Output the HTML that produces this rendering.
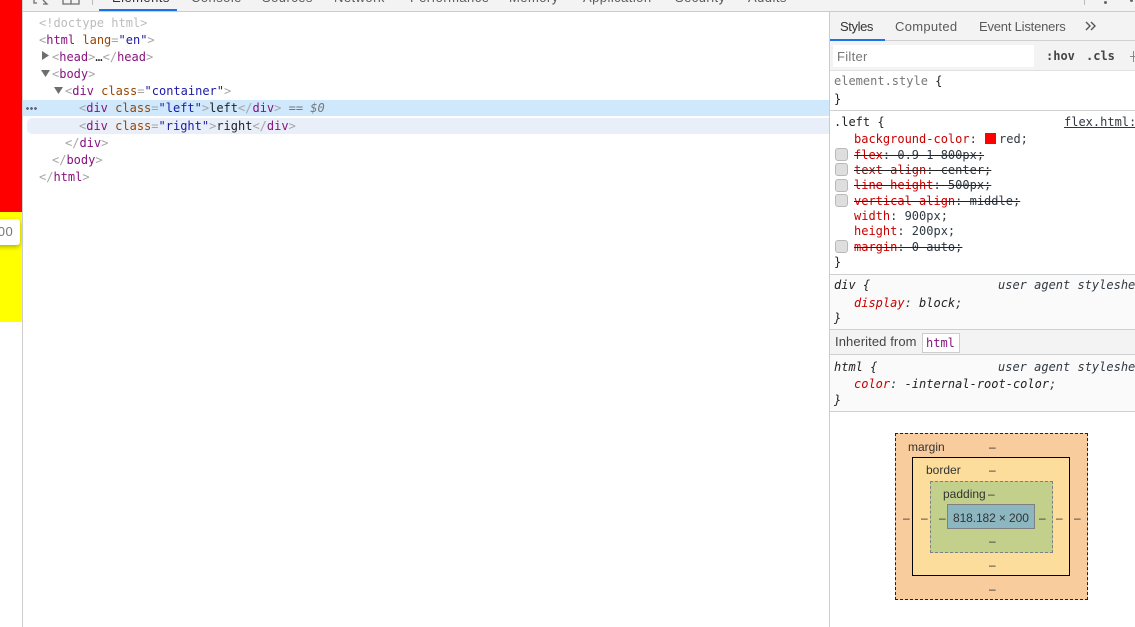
<!DOCTYPE html>
<html lang="en"><head><meta charset="utf-8"><title>DevTools</title>
<style>
*{box-sizing:border-box}
html,body{margin:0;padding:0;width:1135px;height:627px;overflow:hidden;background:#fff}
body{position:relative;font-family:"Liberation Sans",sans-serif}
.a{position:absolute}
.t{position:absolute;white-space:pre;line-height:16px;height:16px}
.m{font-family:"DejaVu Sans Mono","Liberation Mono",monospace;font-size:12px;color:#303942}
.u{font-size:13px;color:#5a5a5a}
.g{color:#a5a5a5}.p{color:#881280}.n{color:#994500}.v{color:#1a1aa6}.k{color:#222}
.r{color:#c80000}.d{color:#303942}
.s{text-decoration:line-through;text-decoration-color:#222}
.c{position:absolute;left:835px;width:13px;height:13px;background:#dedede;border:1px solid #b9b9b9;border-radius:3px}
.b{font-size:12px;color:#333}
.l{position:absolute;background:#d0d0d0;height:1px}
.tab{position:absolute;top:-10px;font-size:13px;letter-spacing:.45px;line-height:16px;color:#5a5a5a;white-space:pre}
</style></head><body>

<!-- page slice -->
<div class="a" style="left:0;top:0;width:22px;height:212px;background:#f00"></div>
<div class="a" style="left:0;top:212px;width:22px;height:110px;background:#ff0"></div>
<div class="a" style="left:-8px;top:219px;width:28px;height:26px;background:#fff;border-radius:3px;box-shadow:0 2px 5px rgba(0,0,0,.3)"></div>
<div class="t" style="left:-10px;top:224px;font-size:13px;color:#777;letter-spacing:.5px">800</div>
<div class="a" style="left:22px;top:0;width:1px;height:627px;background:#ccc"></div>

<!-- top tabs -->
<div class="a" style="left:23px;top:0;width:1112px;height:12px;background:#f3f3f3;border-bottom:1px solid #ccc;overflow:hidden">
  <svg class="a" style="left:9px;top:0" width="50" height="8" viewBox="0 0 50 8" fill="none" stroke="#6e6e6e" stroke-width="1.3"><path d="M2 0v3h3M11 0l4 4h-4"/><path d="M31 0v4h16V0M39 0v4"/></svg>
  <div class="a" style="left:69px;top:0;width:1px;height:5px;background:#bbb"></div>
  <div class="tab" style="left:89px;color:#333">Elements</div>
  <div class="tab" style="left:168px">Console</div>
  <div class="tab" style="left:239px">Sources</div>
  <div class="tab" style="left:311px">Network</div>
  <div class="tab" style="left:387px">Performance</div>
  <div class="tab" style="left:486px">Memory</div>
  <div class="tab" style="left:560px">Application</div>
  <div class="tab" style="left:652px">Security</div>
  <div class="tab" style="left:725px">Audits</div>
  <div class="a" style="left:76px;top:9px;width:78px;height:2px;background:#1a73e8"></div>
  <div class="a" style="left:1061px;top:0;width:1px;height:5px;background:#bbb"></div>
  <div class="a" style="left:1081px;top:1px;width:3px;height:3px;border-radius:50%;background:#666"></div>
  <div class="a" style="left:1107px;top:-1px;width:3px;height:3px;border-radius:50%;background:#666"></div>
</div>

<!-- DOM tree -->
<div class="a" style="left:23px;top:100px;width:806px;height:16px;background:#cfe8fc"></div>
<div class="a" style="left:27px;top:118px;width:802px;height:16px;background:#e9eff9;border-radius:5px 0 0 5px"></div>
<div class="a" style="left:26px;top:107px;width:12px;height:3px;background:radial-gradient(circle at 1.5px 1.5px,#5f6b76 1.3px,transparent 1.5px) 0 0/4px 3px repeat-x"></div>
<div class="t m g" style="left:39px;top:15px;color:#bcbcbc">&lt;!doctype html&gt;</div>
<div class="t m" style="left:39px;top:32px"><span class="g">&lt;</span><span class="p">html</span> <span class="n">lang</span><span class="g">=</span><span class="v">"en"</span><span class="g">&gt;</span></div>
<svg class="a" style="left:42px;top:51px" width="8" height="10"><path d="M0 0l7 4.5L0 9z" fill="#6e6e6e"/></svg>
<div class="t m" style="left:52px;top:49px"><span class="g">&lt;</span><span class="p">head</span><span class="g">&gt;</span><span class="k">…</span><span class="g">&lt;/</span><span class="p">head</span><span class="g">&gt;</span></div>
<svg class="a" style="left:41px;top:70px" width="10" height="8"><path d="M0 0h9L4.5 7z" fill="#6e6e6e"/></svg>
<div class="t m" style="left:52px;top:66px"><span class="g">&lt;</span><span class="p">body</span><span class="g">&gt;</span></div>
<svg class="a" style="left:54px;top:87px" width="10" height="8"><path d="M0 0h9L4.5 7z" fill="#6e6e6e"/></svg>
<div class="t m" style="left:65px;top:83px"><span class="g">&lt;</span><span class="p">div</span> <span class="n">class</span><span class="g">=</span><span class="v">"container"</span><span class="g">&gt;</span></div>
<div class="t m" style="left:79px;top:100px"><span class="g">&lt;</span><span class="p">div</span> <span class="n">class</span><span class="g">=</span><span class="v">"left"</span><span class="g">&gt;</span><span class="k">left</span><span class="g">&lt;/</span><span class="p">div</span><span class="g">&gt;</span><span style="color:#777"> == <i>$0</i></span></div>
<div class="t m" style="left:79px;top:118px"><span class="g">&lt;</span><span class="p">div</span> <span class="n">class</span><span class="g">=</span><span class="v">"right"</span><span class="g">&gt;</span><span class="k">right</span><span class="g">&lt;/</span><span class="p">div</span><span class="g">&gt;</span></div>
<div class="t m" style="left:65px;top:135px"><span class="g">&lt;/</span><span class="p">div</span><span class="g">&gt;</span></div>
<div class="t m" style="left:52px;top:152px"><span class="g">&lt;/</span><span class="p">body</span><span class="g">&gt;</span></div>
<div class="t m" style="left:39px;top:169px"><span class="g">&lt;/</span><span class="p">html</span><span class="g">&gt;</span></div>

<!-- sidebar -->
<div class="a" style="left:829px;top:12px;width:1px;height:615px;background:#ccc"></div>
<div class="a" style="left:830px;top:12px;width:305px;height:58px;background:#f3f3f3"></div>
<div class="l" style="left:830px;top:40px;width:305px"></div>
<div class="a" style="left:830px;top:39px;width:55px;height:2px;background:#1a73e8"></div>
<div class="t u" style="left:840px;top:19px;color:#333;letter-spacing:-.4px">Styles</div>
<div class="t u" style="left:895px;top:19px;letter-spacing:.3px">Computed</div>
<div class="t u" style="left:979px;top:19px;letter-spacing:-.2px">Event Listeners</div>
<svg class="a" style="left:1085px;top:21px" width="12" height="10" fill="none" stroke="#555" stroke-width="1.4"><path d="M1 1l4 4-4 4M6 1l4 4-4 4"/></svg>
<div class="a" style="left:833px;top:45px;width:201px;height:22px;background:#fff"></div>
<div class="t u" style="left:837px;top:49px;color:#777;letter-spacing:.3px">Filter</div>
<div class="t m" style="left:1046px;top:48px;font-weight:bold;color:#444">:hov</div>
<div class="t m" style="left:1086px;top:48px;font-weight:bold;color:#444">.cls</div>
<div class="a" style="left:1130px;top:56px;width:5px;height:1px;background:#888"></div>
<div class="a" style="left:1133px;top:51px;width:1px;height:11px;background:#888"></div>
<div class="l" style="left:830px;top:70px;width:305px;background:#e0e0e0"></div>

<div class="t m" style="left:834px;top:73px;color:#777">element.style <span class="k">{</span></div>
<div class="t m k" style="left:834px;top:91px">}</div>
<div class="l" style="left:830px;top:110px;width:305px"></div>

<div class="t m k" style="left:834px;top:114px">.left {</div>
<div class="t m k" style="left:1064px;top:114px;text-decoration:underline;color:#303942">flex.html:</div>
<div class="t m" style="left:854px;top:131px"><span class="r">background-color</span>:</div>
<div class="a" style="left:985px;top:133px;width:11px;height:11px;background:#f00"></div>
<div class="t m" style="left:999px;top:131px">red;</div>
<div class="c" style="top:148px"></div>
<div class="t m s" style="left:854px;top:147px"><span class="r">flex</span>: 0.9 1 800px;</div>
<div class="c" style="top:163px"></div>
<div class="t m s" style="left:854px;top:162px"><span class="r">text-align</span>: center;</div>
<div class="c" style="top:179px"></div>
<div class="t m s" style="left:854px;top:177px"><span class="r">line-height</span>: 500px;</div>
<div class="c" style="top:194px"></div>
<div class="t m s" style="left:854px;top:193px"><span class="r">vertical-align</span>: middle;</div>
<div class="t m" style="left:854px;top:208px"><span class="r">width</span>: 900px;</div>
<div class="t m" style="left:854px;top:223px"><span class="r">height</span>: 200px;</div>
<div class="c" style="top:240px"></div>
<div class="t m s" style="left:854px;top:239px"><span class="r">margin</span>: 0 auto;</div>
<div class="t m k" style="left:834px;top:254px">}</div>
<div class="l" style="left:830px;top:274px;width:305px"></div>

<div class="a" style="left:830px;top:275px;width:305px;height:136px;background:#fafafa"></div>
<div class="t m k" style="left:834px;top:277px;font-style:italic">div {</div>
<div class="t m" style="left:998px;top:277px;font-style:italic">user agent styleshe</div>
<div class="t m" style="left:854px;top:295px;font-style:italic"><span class="r">display</span>: <span class="k">block</span>;</div>
<div class="t m k" style="left:834px;top:310px;font-style:italic">}</div>
<div class="a" style="left:830px;top:329px;width:305px;height:26px;background:#f3f3f3;border-top:1px solid #d0d0d0;border-bottom:1px solid #d0d0d0"></div>
<div class="t u" style="left:835px;top:334px;color:#444;letter-spacing:.1px">Inherited from</div>
<div class="a" style="left:922px;top:333px;width:38px;height:20px;background:#fff;border:1px solid #ccc"></div>
<div class="t m p" style="left:926px;top:335px">html</div>
<div class="t m k" style="left:834px;top:359px;font-style:italic">html {</div>
<div class="t m" style="left:998px;top:359px;font-style:italic">user agent styleshe</div>
<div class="t m" style="left:854px;top:376px;font-style:italic"><span class="r">color</span>: <span class="k">-internal-root-color</span>;</div>
<div class="t m k" style="left:834px;top:392px;font-style:italic">}</div>
<div class="l" style="left:830px;top:411px;width:305px"></div>

<!-- box model -->
<div class="a" style="left:895px;top:433px;width:193px;height:167px;background:#f9cc9d;border:1px dashed #222"></div>
<div class="a" style="left:912px;top:457px;width:158px;height:119px;background:#fddd9b;border:1px solid #000"></div>
<div class="a" style="left:930px;top:481px;width:123px;height:72px;background:#c3d08b;border:1px dashed #808080"></div>
<div class="a" style="left:947px;top:504px;width:88px;height:25px;background:#8cb6c0;border:1px solid #808080"></div>
<div class="t b" style="left:908px;top:439px">margin</div>
<div class="t b" style="left:926px;top:462px">border</div>
<div class="t b" style="left:943px;top:486px">padding</div>
<div class="t b" style="left:953px;top:510px;letter-spacing:-.1px">818.182 × 200</div>
<div class="t b" style="left:989px;top:439px">–</div>
<div class="t b" style="left:989px;top:462px">–</div>
<div class="t b" style="left:988px;top:486px">–</div>
<div class="t b" style="left:989px;top:533px">–</div>
<div class="t b" style="left:989px;top:557px">–</div>
<div class="t b" style="left:989px;top:581px">–</div>
<div class="t b" style="left:903px;top:510px">–</div>
<div class="t b" style="left:921px;top:510px">–</div>
<div class="t b" style="left:939px;top:510px">–</div>
<div class="t b" style="left:1039px;top:510px">–</div>
<div class="t b" style="left:1056px;top:510px">–</div>
<div class="t b" style="left:1074px;top:510px">–</div>
</body></html>
